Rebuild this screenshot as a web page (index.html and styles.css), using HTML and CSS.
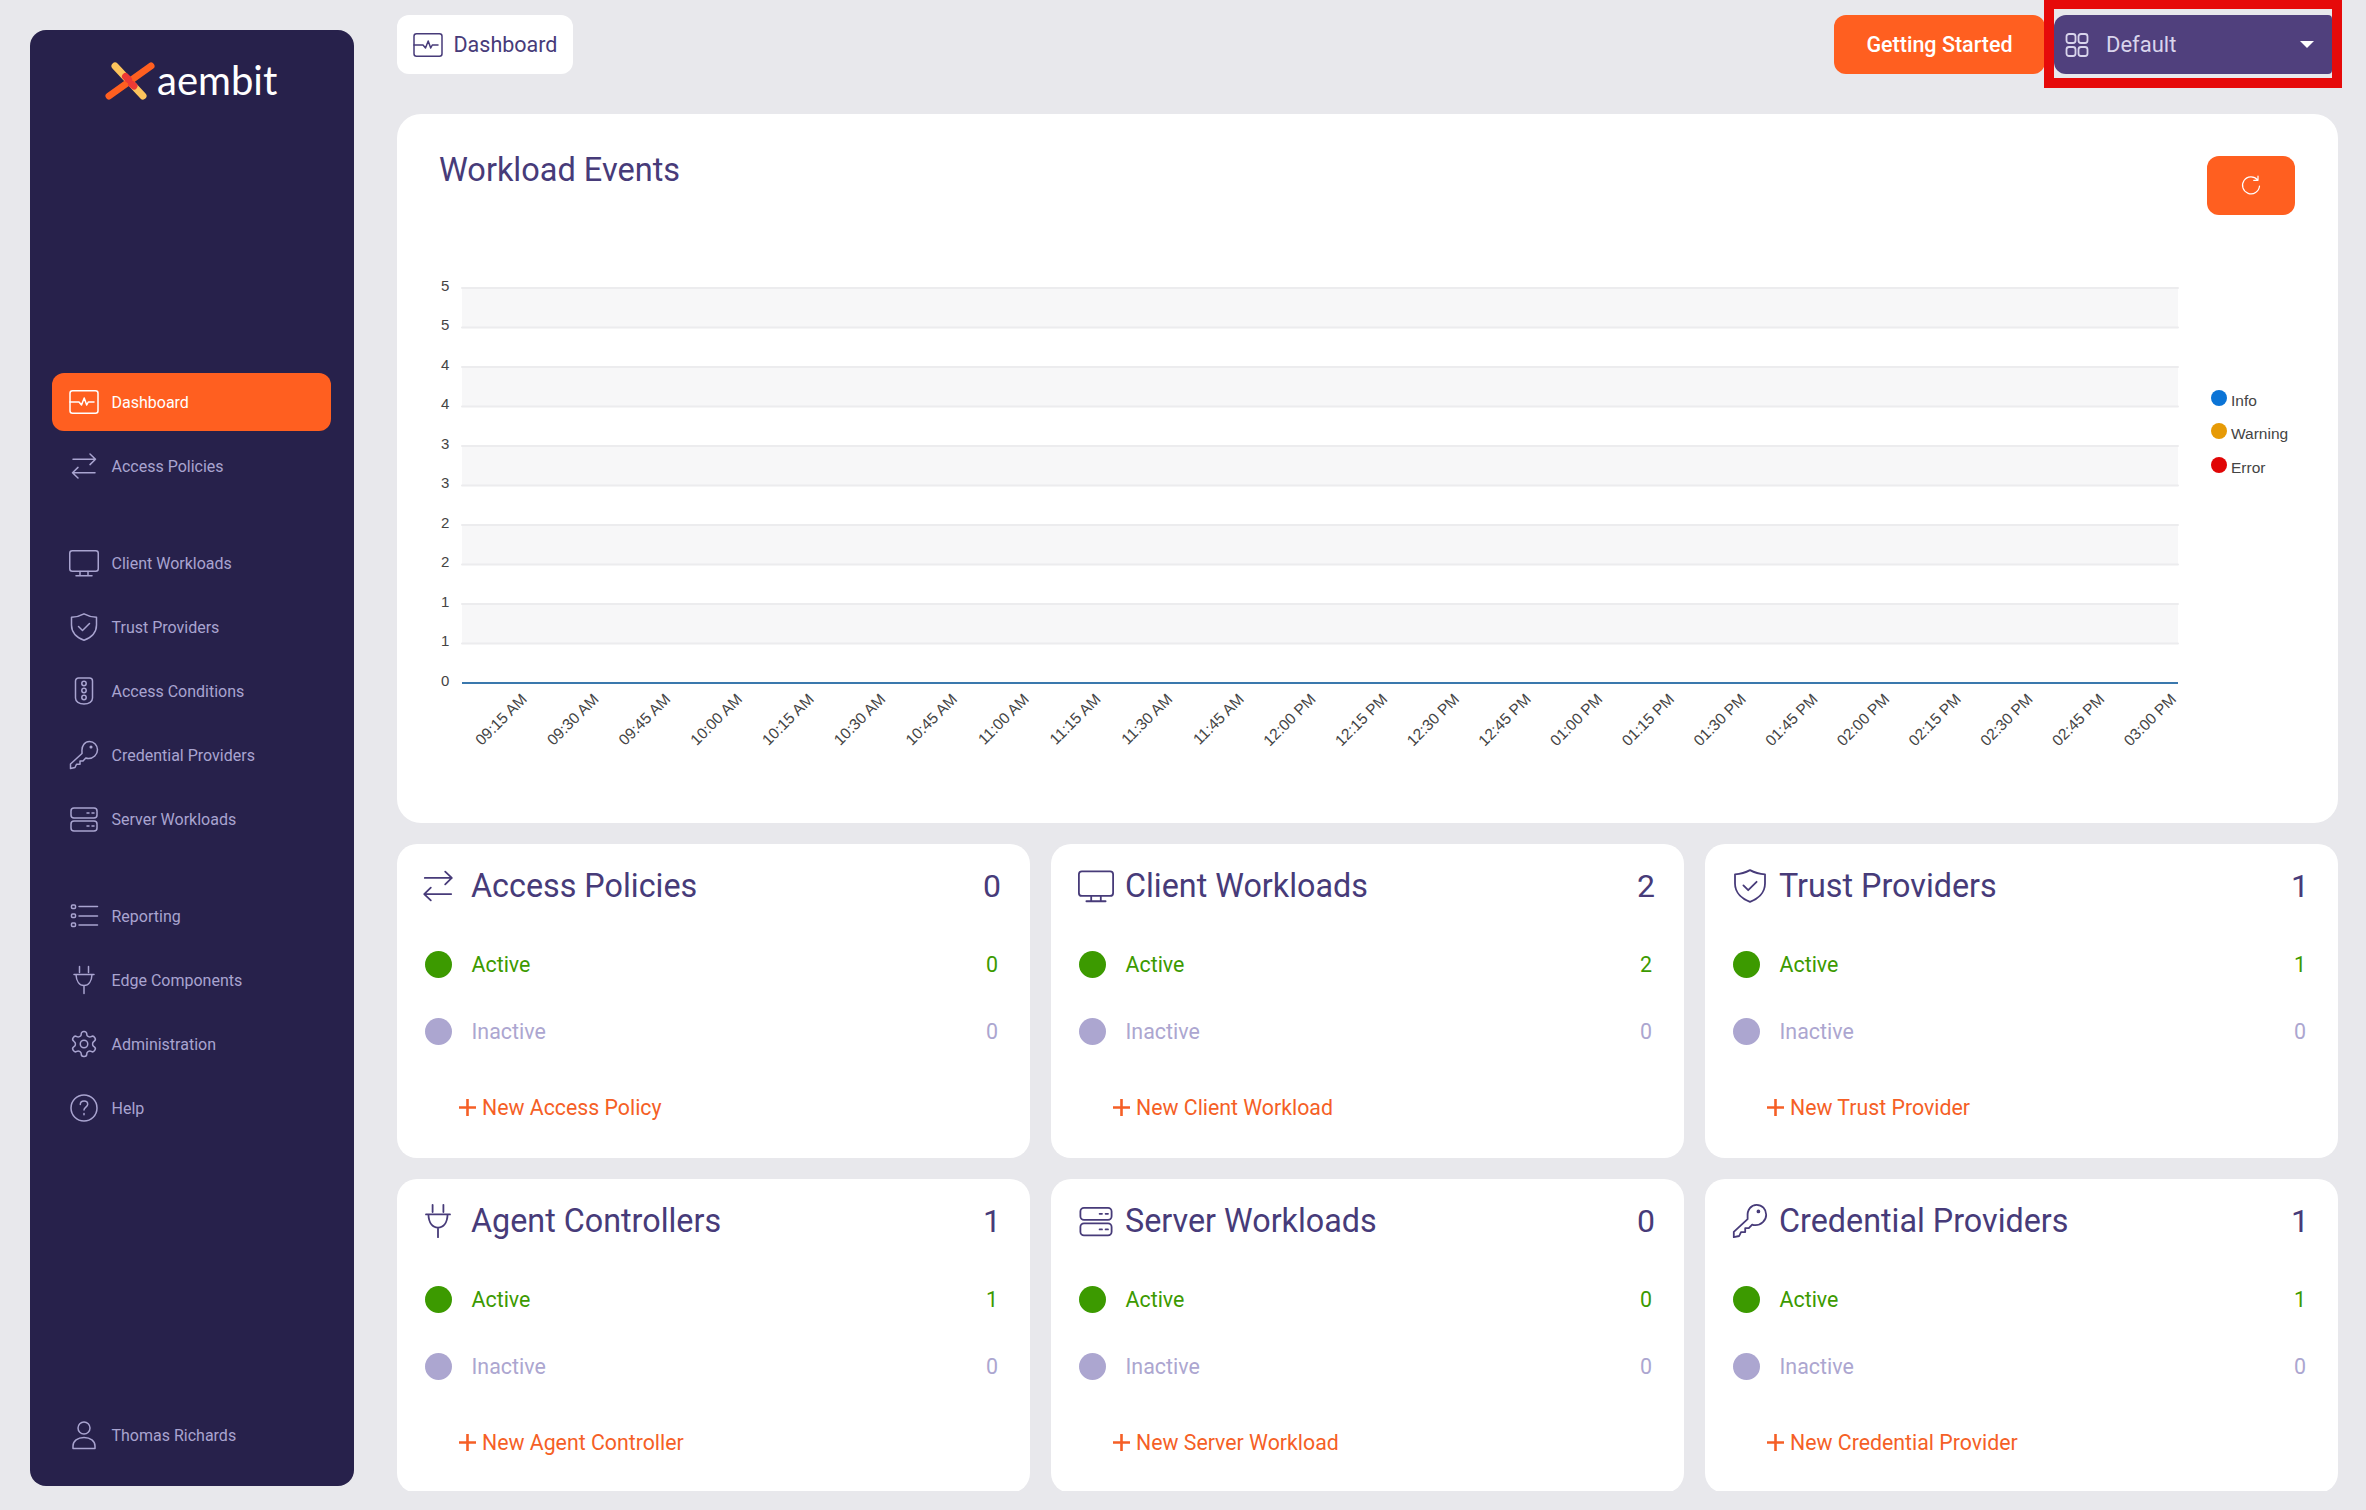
FILE: index.html
```html
<!DOCTYPE html>
<html lang="en">
<head>
<meta charset="utf-8">
<title>Aembit Dashboard</title>
<link rel="stylesheet" href="styles.css">
</head>
<body>
<svg class="sprite" aria-hidden="true">
  <symbol id="i-activity" viewBox="0 0 30 30"><rect x="1" y="3.8" width="28" height="22.4" rx="2.5"/><path d="M1 15h9l2.5 3 2.7-7 2.5 7 1.600-3H25"/></symbol>
  <symbol id="i-arrows" viewBox="0 0 30 30"><path d="M4 8.3h22.5M21 3l5.5 5.3L21 13.6M26 21.7H3.5M9 16.4l-5.5 5.3L9 27"/></symbol>
  <symbol id="i-monitor" viewBox="0 0 30 30"><rect x=".75" y="2.75" width="28.5" height="20.5" rx="2.5"/><path d="M11 23.5v4M19 23.5v4M7 27.7h16"/></symbol>
  <symbol id="i-shield" viewBox="0 0 30 30"><path d="M15 1.8C19 4 23 5 27.5 5.3V13c0 8-6.500 13-12.500 15.300C9 26 2.500 21 2.500 13V5.300C7 5 11 4 15 1.800Z"/><path d="M9.500 14.500l4 4 7-7"/></symbol>
  <symbol id="i-traffic" viewBox="0 0 30 30"><path d="M9.500 2h11a3 3 0 0 1 3 3v17c0 3.500-3.500 6-8.500 6s-8.500-2.500-8.500-6V5a3 3 0 0 1 3-3Z"/><circle cx="15" cy="7.500" r="2.200"/><circle cx="15" cy="14.500" r="2.200"/><circle cx="15" cy="21.500" r="2.200"/></symbol>
  <symbol id="i-key" viewBox="0 0 30 30"><path d="M13 11.500C12.500 5.500 16 1.500 20.500 1.500c4.500 0 8 3.700 8 8.300 0 4.900-4.300 8.700-9 8.700-1 0-2-.2-2.700-.5L14 21h-3v3.200H7.500L6 27.500l-4.500 1V24L13 13.500Z"/><circle cx="22" cy="7" r=".8"/></symbol>
  <symbol id="i-server" viewBox="0 0 30 30"><rect x="2" y="4" width="26" height="10" rx="3"/><rect x="2" y="17" width="26" height="10" rx="3"/><path d="M18 9h2M23 9h2M18 22h2M23 22h2"/></symbol>
  <symbol id="i-list" viewBox="0 0 30 30"><rect x="2.500" y="4" width="4" height="3.500" rx="1"/><rect x="2.500" y="13" width="4" height="3.500" rx="1"/><rect x="2.500" y="22" width="4" height="3.500" rx="1"/><path d="M10 5.500h18.500M10 15h18.500M10 24h18.500"/></symbol>
  <symbol id="i-plug" viewBox="0 0 30 30"><path d="M10.500 1.500v6M19.500 1.500v6M5 9.500h20M7 9.500c.3 7 3.500 11 8 11s7.700-4 8-11M15 20.500v8"/></symbol>
  <symbol id="i-gear" viewBox="0 0 30 30"><g transform="scale(1.25)"><path class="thin" d="M12.220 2h-.44a2 2 0 0 0-2 2v.18a2 2 0 0 1-1 1.730l-.43.250a2 2 0 0 1-2 0l-.15-.08a2 2 0 0 0-2.730.730l-.22.380a2 2 0 0 0 .730 2.730l.15.100a2 2 0 0 1 1 1.720v.510a2 2 0 0 1-1 1.740l-.15.090a2 2 0 0 0-.730 2.730l.22.380a2 2 0 0 0 2.730.730l.15-.08a2 2 0 0 1 2 0l.43.250a2 2 0 0 1 1 1.730V20a2 2 0 0 0 2 2h.44a2 2 0 0 0 2-2v-.18a2 2 0 0 1 1-1.730l.43-.25a2 2 0 0 1 2 0l.15.080a2 2 0 0 0 2.730-.730l.22-.39a2 2 0 0 0-.730-2.730l-.15-.08a2 2 0 0 1-1-1.740v-.5a2 2 0 0 1 1-1.740l.15-.09a2 2 0 0 0 .730-2.730l-.22-.38a2 2 0 0 0-2.730-.730l-.15.080a2 2 0 0 1-2 0l-.43-.25a2 2 0 0 1-1-1.730V4a2 2 0 0 0-2-2z"/><circle class="thin" cx="12" cy="12" r="3"/></g></symbol>
  <symbol id="i-help" viewBox="0 0 30 30"><circle cx="15" cy="15" r="13"/><path d="M11.300 11.500c0-2.200 1.700-3.500 3.800-3.500s3.600 1.300 3.600 3.200c0 2.800-3.700 2.900-3.700 5.800M15 20.500v1.200"/></symbol>
  <symbol id="i-user" viewBox="0 0 30 30"><circle cx="15" cy="8" r="6"/><path d="M4 28.500V26c0-5 4.500-8.500 11-8.500S26 21 26 26v2.500Z"/></symbol>
  <symbol id="i-grid" viewBox="0 0 24 24"><rect x="1.500" y="1" width="9" height="9" rx="2.500"/><rect x="13.500" y="1" width="9" height="9" rx="2.500"/><rect x="1.500" y="14" width="9" height="9" rx="2.500"/><rect x="13.500" y="14" width="9" height="9" rx="2.500"/></symbol>
  <symbol id="i-refresh" viewBox="0 0 24 24"><path d="M18.500 5.800A8.500 8.500 0 1 0 20.500 12M19 2v4.300h-4.300"/></symbol>
  <symbol id="i-plus" viewBox="0 0 17 17"><path d="M8.500 0v17M0 8.500h17"/></symbol>
</svg>

<div class="app">
  <aside class="sidebar">
    <div class="logo">
      <svg class="logo-mark" viewBox="0 0 50 38" aria-hidden="true">
        <path class="logo-yellow" d="M10 4l28 30"/>
        <path class="logo-orange" d="M46 4L4 34"/>
        <path class="logo-red" d="M20.500 14.500l3 3M26.500 22l2.500 2"/>
      </svg>
      <span class="logo-text">aembit</span>
    </div>
    <nav class="nav">
      <div class="nav-group">
        <a class="nav-item active"><svg class="ico"><use href="#i-activity"/></svg><span>Dashboard</span></a>
        <a class="nav-item"><svg class="ico"><use href="#i-arrows"/></svg><span>Access Policies</span></a>
      </div>
      <div class="nav-group">
        <a class="nav-item"><svg class="ico"><use href="#i-monitor"/></svg><span>Client Workloads</span></a>
        <a class="nav-item"><svg class="ico"><use href="#i-shield"/></svg><span>Trust Providers</span></a>
        <a class="nav-item"><svg class="ico"><use href="#i-traffic"/></svg><span>Access Conditions</span></a>
        <a class="nav-item"><svg class="ico"><use href="#i-key"/></svg><span>Credential Providers</span></a>
        <a class="nav-item"><svg class="ico"><use href="#i-server"/></svg><span>Server Workloads</span></a>
      </div>
      <div class="nav-group">
        <a class="nav-item"><svg class="ico"><use href="#i-list"/></svg><span>Reporting</span></a>
        <a class="nav-item"><svg class="ico"><use href="#i-plug"/></svg><span>Edge Components</span></a>
        <a class="nav-item"><svg class="ico"><use href="#i-gear"/></svg><span>Administration</span></a>
        <a class="nav-item"><svg class="ico"><use href="#i-help"/></svg><span>Help</span></a>
      </div>
    </nav>
    <a class="nav-item user"><svg class="ico"><use href="#i-user"/></svg><span>Thomas Richards</span></a>
  </aside>

  <main class="main">
    <header class="topbar">
      <div class="crumb"><svg class="ico"><use href="#i-activity"/></svg><span>Dashboard</span></div>
      <button class="btn-start">Getting Started</button>
      <div class="select">
        <svg class="select-ico"><use href="#i-grid"/></svg>
        <span class="select-label">Default</span>
        <span class="caret"></span>
        <span class="highlight"></span>
      </div>
    </header>

    <section class="events">
      <div class="events-head">
        <h1>Workload Events</h1>
        <button class="btn-refresh" aria-label="Refresh"><svg class="refresh-ico"><use href="#i-refresh"/></svg></button>
      </div>
      <svg class="chart" viewBox="440 215 1855 585">
        <g class="bands">
          <rect x="462" y="288" width="1716" height="39.500"/>
          <rect x="462" y="367" width="1716" height="39.500"/>
          <rect x="462" y="446" width="1716" height="39.500"/>
          <rect x="462" y="525" width="1716" height="39.500"/>
          <rect x="462" y="604" width="1716" height="39.500"/>
        </g>
        <path class="grid" d="M462 288H2178M462 327.500H2178M462 367H2178M462 406.500H2178M462 446H2178M462 485.500H2178M462 525H2178M462 564.500H2178M462 604H2178M462 643.500H2178"/>
        <path class="baseline" d="M462 683H2178"/>
        <g class="ylabels">
          <text x="441" y="291">5</text><text x="441" y="330">5</text>
          <text x="441" y="370">4</text><text x="441" y="409">4</text>
          <text x="441" y="449">3</text><text x="441" y="488">3</text>
          <text x="441" y="528">2</text><text x="441" y="567">2</text>
          <text x="441" y="607">1</text><text x="441" y="646">1</text>
          <text x="441" y="686">0</text>
        </g>
        <g class="xlabels">
          <text x="528" y="700" transform="rotate(-45 528 700)">09:15 AM</text>
          <text x="599.700" y="700" transform="rotate(-45 599.700 700)">09:30 AM</text>
          <text x="671.400" y="700" transform="rotate(-45 671.400 700)">09:45 AM</text>
          <text x="743.100" y="700" transform="rotate(-45 743.100 700)">10:00 AM</text>
          <text x="814.800" y="700" transform="rotate(-45 814.800 700)">10:15 AM</text>
          <text x="886.500" y="700" transform="rotate(-45 886.500 700)">10:30 AM</text>
          <text x="958.200" y="700" transform="rotate(-45 958.200 700)">10:45 AM</text>
          <text x="1029.900" y="700" transform="rotate(-45 1029.900 700)">11:00 AM</text>
          <text x="1101.600" y="700" transform="rotate(-45 1101.600 700)">11:15 AM</text>
          <text x="1173.300" y="700" transform="rotate(-45 1173.300 700)">11:30 AM</text>
          <text x="1245" y="700" transform="rotate(-45 1245 700)">11:45 AM</text>
          <text x="1316.700" y="700" transform="rotate(-45 1316.700 700)">12:00 PM</text>
          <text x="1388.400" y="700" transform="rotate(-45 1388.400 700)">12:15 PM</text>
          <text x="1460.100" y="700" transform="rotate(-45 1460.100 700)">12:30 PM</text>
          <text x="1531.800" y="700" transform="rotate(-45 1531.800 700)">12:45 PM</text>
          <text x="1603.500" y="700" transform="rotate(-45 1603.500 700)">01:00 PM</text>
          <text x="1675.200" y="700" transform="rotate(-45 1675.200 700)">01:15 PM</text>
          <text x="1746.900" y="700" transform="rotate(-45 1746.900 700)">01:30 PM</text>
          <text x="1818.600" y="700" transform="rotate(-45 1818.600 700)">01:45 PM</text>
          <text x="1890.300" y="700" transform="rotate(-45 1890.300 700)">02:00 PM</text>
          <text x="1962" y="700" transform="rotate(-45 1962 700)">02:15 PM</text>
          <text x="2033.700" y="700" transform="rotate(-45 2033.700 700)">02:30 PM</text>
          <text x="2105.400" y="700" transform="rotate(-45 2105.400 700)">02:45 PM</text>
          <text x="2177.100" y="700" transform="rotate(-45 2177.100 700)">03:00 PM</text>
        </g>
        <g class="legend">
          <circle class="l-info" cx="2219" cy="398" r="8"/><text x="2231" y="405.500">Info</text>
          <circle class="l-warn" cx="2219" cy="431" r="8"/><text x="2231" y="438.500">Warning</text>
          <circle class="l-error" cx="2219" cy="465" r="8"/><text x="2231" y="472.500">Error</text>
        </g>
      </svg>
    </section>

    <section class="cards">
      <article class="card">
        <div class="card-head"><svg class="card-ico"><use href="#i-arrows"/></svg><h2>Access Policies</h2><span class="total">0</span></div>
        <div class="row row-on"><span class="dot"></span><span class="row-label">Active</span><span class="num">0</span></div>
        <div class="row row-off"><span class="dot"></span><span class="row-label">Inactive</span><span class="num">0</span></div>
        <a class="new"><svg class="plus"><use href="#i-plus"/></svg>New Access Policy</a>
      </article>
      <article class="card">
        <div class="card-head"><svg class="card-ico"><use href="#i-monitor"/></svg><h2>Client Workloads</h2><span class="total">2</span></div>
        <div class="row row-on"><span class="dot"></span><span class="row-label">Active</span><span class="num">2</span></div>
        <div class="row row-off"><span class="dot"></span><span class="row-label">Inactive</span><span class="num">0</span></div>
        <a class="new"><svg class="plus"><use href="#i-plus"/></svg>New Client Workload</a>
      </article>
      <article class="card">
        <div class="card-head"><svg class="card-ico"><use href="#i-shield"/></svg><h2>Trust Providers</h2><span class="total">1</span></div>
        <div class="row row-on"><span class="dot"></span><span class="row-label">Active</span><span class="num">1</span></div>
        <div class="row row-off"><span class="dot"></span><span class="row-label">Inactive</span><span class="num">0</span></div>
        <a class="new"><svg class="plus"><use href="#i-plus"/></svg>New Trust Provider</a>
      </article>
      <article class="card">
        <div class="card-head"><svg class="card-ico"><use href="#i-plug"/></svg><h2>Agent Controllers</h2><span class="total">1</span></div>
        <div class="row row-on"><span class="dot"></span><span class="row-label">Active</span><span class="num">1</span></div>
        <div class="row row-off"><span class="dot"></span><span class="row-label">Inactive</span><span class="num">0</span></div>
        <a class="new"><svg class="plus"><use href="#i-plus"/></svg>New Agent Controller</a>
      </article>
      <article class="card">
        <div class="card-head"><svg class="card-ico"><use href="#i-server"/></svg><h2>Server Workloads</h2><span class="total">0</span></div>
        <div class="row row-on"><span class="dot"></span><span class="row-label">Active</span><span class="num">0</span></div>
        <div class="row row-off"><span class="dot"></span><span class="row-label">Inactive</span><span class="num">0</span></div>
        <a class="new"><svg class="plus"><use href="#i-plus"/></svg>New Server Workload</a>
      </article>
      <article class="card">
        <div class="card-head"><svg class="card-ico"><use href="#i-key"/></svg><h2>Credential Providers</h2><span class="total">1</span></div>
        <div class="row row-on"><span class="dot"></span><span class="row-label">Active</span><span class="num">1</span></div>
        <div class="row row-off"><span class="dot"></span><span class="row-label">Inactive</span><span class="num">0</span></div>
        <a class="new"><svg class="plus"><use href="#i-plus"/></svg>New Credential Provider</a>
      </article>
    </section>
  </main>
</div>
</body>
</html>
```
FILE: styles.css
```css
* { box-sizing: border-box; }
html, body { margin: 0; height: 1510px; overflow: hidden; }
body { background: #e8e8ec; font-family: "Roboto", "Noto Sans", sans-serif; color: #473b79; }
.sprite { display: none; }
symbol { overflow: visible; }
svg { fill: none; stroke: currentColor; stroke-width: 1.5; stroke-linecap: round; stroke-linejoin: round; }
.thin { stroke-width: 1.2; }

.app { display: flex; height: 1491px; padding-left: 30px; }

/* sidebar */
.sidebar { flex: 0 0 324px; height: 1456px; margin-top: 30px; padding: 32px 23px 22px 22px; background: #27214b; border-radius: 16px; display: flex; flex-direction: column; color: #a9a4d0; }
.logo { display: flex; align-items: center; height: 38px; padding-left: 53px; gap: 2px; }
.logo-mark { width: 50px; height: 38px; flex: none; stroke-width: 7; }
.logo-yellow { stroke: #fdc45c; }
.logo-orange { stroke: #ff5f20; }
.logo-red { stroke: #ee3a34; }
.logo-text { font-family: "Lato", sans-serif; font-size: 40px; line-height: 38px; color: #fff; margin-top: -3px; }
.nav { margin-top: 273px; display: flex; flex-direction: column; gap: 39px; }
.nav-group { display: flex; flex-direction: column; gap: 6px; }
.nav-item { display: flex; align-items: center; height: 58px; padding-left: 17px; gap: 12.500px; border-radius: 12px; font-size: 16px; }
.nav-item.active { background: #ff5f20; color: #fff; }
.ico { width: 30px; height: 30px; flex: none; }
.user { margin-top: auto; }

/* top bar */
.main { flex: 0 0 1941px; margin-left: 43px; height: 1491px; }
.topbar { display: flex; align-items: center; height: 59px; margin-top: 15px; padding-right: 6px; }
.crumb { display: flex; align-items: center; gap: 10.500px; height: 59px; padding: 0 16px; background: #fff; border-radius: 12px; font-size: 21.500px; margin-right: auto; }
.btn-start { width: 211px; height: 59px; border: 0; border-radius: 12px; background: #ff5f20; color: #fff; font: 500 21.500px "Roboto", sans-serif; padding: 0; }
.select { position: relative; display: flex; align-items: center; width: 278px; height: 59px; margin-left: 9px; padding: 0 18px 0 11px; background: #50407d; border-radius: 12px 4px 4px 12px; color: #d9d5ec; }
.select-ico { width: 24px; height: 24px; flex: none; stroke-width: 1.800; }
.select-label { font-size: 22px; margin-left: 17px; }
.caret { margin-left: auto; width: 0; height: 0; border-left: 7px solid transparent; border-right: 7px solid transparent; border-top: 7px solid #fff; }
.highlight { position: absolute; left: -10px; right: -10px; top: -15px; bottom: -14px; border: 10px solid #e60a0a; border-top-width: 9px; pointer-events: none; }

/* events card */
.events { margin-top: 40px; height: 709px; padding: 42px 43px 0; background: #fff; border-radius: 24px; }
.events-head { display: flex; justify-content: space-between; align-items: flex-start; height: 59px; }
.events-head h1 { margin: -4px 0 0 -1px; font-size: 32.500px; font-weight: 400; line-height: 36px; }
.btn-refresh { display: flex; align-items: center; justify-content: center; width: 88px; height: 59px; border: 0; border-radius: 12px; background: #ff5f20; color: #fff; padding: 0; }
.refresh-ico { width: 24px; height: 24px; stroke-width: 1.200; }

.chart { display: block; width: 1855px; height: 585px; stroke: none; }
.chart text { font-family: "Liberation Sans", Arial, sans-serif; font-size: 15px; fill: #444; stroke: none; }
.bands rect { fill: #f7f7f8; }
.grid { stroke: #ececee; stroke-width: 2; }
.baseline { stroke: #3a78ad; stroke-width: 2; stroke-linecap: butt; }
.xlabels text { text-anchor: end; font-size: 15.500px; }
.legend text { font-size: 15.500px; }
.l-info { fill: #0b74d6; }
.l-warn { fill: #e69a06; }
.l-error { fill: #e00606; }

/* small cards */
.cards { display: grid; grid-template-columns: repeat(3, 633px); grid-auto-rows: 314px; gap: 21px; height: 647px; margin-top: 21px; overflow: hidden; }
.card { padding: 24px 29px 0 28px; background: #fff; border-radius: 20px; }
.card-head { display: flex; align-items: center; height: 36px; }
.card-ico { width: 36px; height: 36px; flex: none; margin-left: -1px; stroke-width: 1.500; }
.card:nth-child(3n+1) .card-ico { margin-left: -5.500px; margin-right: 4.500px; }
.card-head h2 { margin: 0 0 0 11px; font-size: 32.300px; font-weight: 400; }
.total { margin-left: auto; font-size: 32px; }
.row { display: flex; align-items: center; height: 27px; margin-top: 40px; font-size: 21.400px; padding-right: 3px; }
.card-head + .row { margin-top: 47px; }
.dot { width: 27px; height: 27px; border-radius: 50%; background: currentColor; flex: none; }
.row-label { margin-left: 19.500px; }
.num { margin-left: auto; }
.row-on { color: #3c9a00; }
.row-off { color: #aca6d0; }
.new { display: flex; align-items: center; gap: 6px; height: 30px; margin-top: 47px; padding-left: 34px; font-size: 21.300px; color: #f55f26; }
.plus { width: 17px; height: 17px; flex: none; stroke-width: 2.600; }
```
